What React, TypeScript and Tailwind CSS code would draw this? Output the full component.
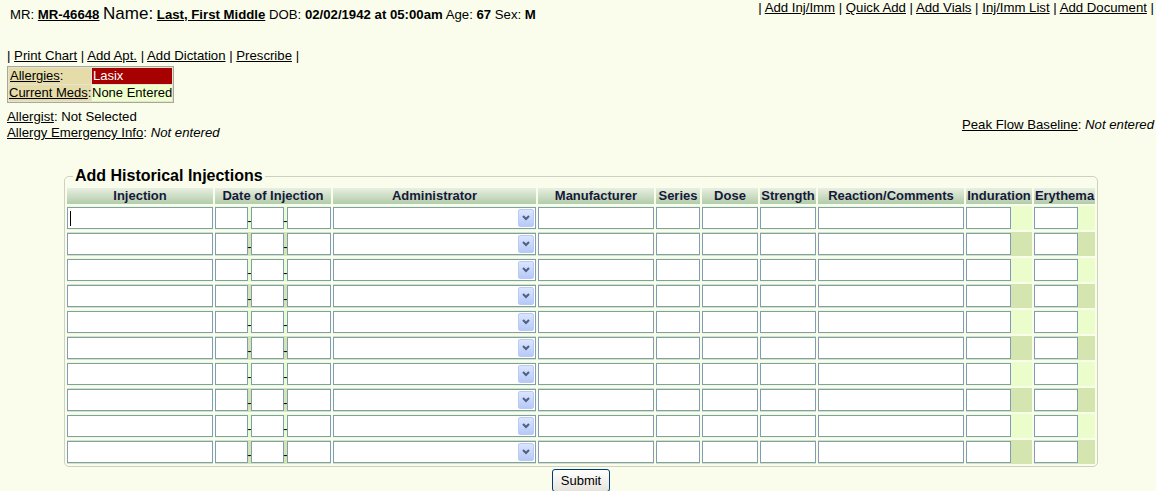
import React from 'react'

const headers: { label: string; col: string }[] = [
	{ label: 'Injection', col: 'w-[146px]' },
	{ label: 'Date of Injection', col: 'w-[116px]' },
	{ label: 'Administrator', col: 'w-[203px]' },
	{ label: 'Manufacturer', col: 'w-[116px]' },
	{ label: 'Series', col: 'w-[44px]' },
	{ label: 'Dose', col: 'w-[56px]' },
	{ label: 'Strength', col: 'w-[56px]' },
	{ label: 'Reaction/Comments', col: 'w-[146px]' },
	{ label: 'Induration', col: 'w-[66px]' },
	{ label: 'Erythema', col: 'w-[61px]' },
]

const inputCls = 'block h-[22px] border border-[#7f9db9] bg-white outline-none'

/**
 * Link with black underline, the old way.
 */
function Link({ children }: { children: React.ReactNode }) {
	return <a className="cursor-pointer text-black underline">{children}</a>
}

/**
 * Pipe separated link bar.
 */
function LinkBar({ links }: { links: string[] }) {
	return (
		<span>
			|{' '}
			{links.map((l, i) => (
				<React.Fragment key={l}>
					<Link>{l}</Link>
					{i < links.length - 1 ? ' | ' : ' |'}
				</React.Fragment>
			))}
		</span>
	)
}

/**
 * XP style dropdown, closed.
 */
function AdminSelect() {
	return (
		<div className="flex h-[22px] w-full items-center justify-end border border-[#7f9db9] bg-white pr-px">
			<div className="flex h-[18px] w-[16px] items-center justify-center rounded-[2px] border border-[#b9cbf5] bg-linear-to-b from-[#dbe5fd] to-[#b6c9f7]">
				<svg width="8" height="6" viewBox="0 0 8 6">
					<polyline points="1,1 4,4 7,1" fill="none" stroke="#4d6185" strokeWidth="2" />
				</svg>
			</div>
		</div>
	)
}

/**
 * One empty injection row.
 */
function InjectionRow({ index }: { index: number }) {
	const bg = index % 2 === 0 ? 'bg-[#ebfdca]' : 'bg-[#d4e5b0]'
	const td = `${bg} p-0 py-px align-middle`
	return (
		<tr>
			<td className={td}>
				<div className="relative">
					<input type="text" className={`${inputCls} w-full`} />
					{index === 0 && <span className="absolute left-[3px] top-[4px] h-[15px] w-px bg-black" />}
				</div>
			</td>
			<td className={td}>
				<div className="flex items-end">
					<input type="text" className={`${inputCls} w-[33px]`} />
					<span className="mb-[2px] flex w-[3px] justify-center text-[13px] leading-[13px]">-</span>
					<input type="text" className={`${inputCls} w-[33px]`} />
					<span className="mb-[2px] flex w-[3px] justify-center text-[13px] leading-[13px]">-</span>
					<input type="text" className={`${inputCls} w-[44px]`} />
				</div>
			</td>
			<td className={td}>
				<AdminSelect />
			</td>
			<td className={td}>
				<input type="text" className={`${inputCls} w-full`} />
			</td>
			<td className={td}>
				<input type="text" className={`${inputCls} w-full`} />
			</td>
			<td className={td}>
				<input type="text" className={`${inputCls} w-full`} />
			</td>
			<td className={td}>
				<input type="text" className={`${inputCls} w-full`} />
			</td>
			<td className={td}>
				<input type="text" className={`${inputCls} w-full`} />
			</td>
			<td className={td}>
				<input type="text" className={`${inputCls} w-[45px]`} />
			</td>
			<td className={td}>
				<input type="text" className={`${inputCls} w-[44px]`} />
			</td>
		</tr>
	)
}

export default function App() {
	return (
		<div className="min-h-[491px] bg-[#fafdec] pl-[7px] pr-[2px] font-['Liberation_Sans',Arial,sans-serif] text-[13.2px] text-black">
			{/* patient header */}
			<div className="flex h-[48px] items-start justify-between">
				<div className="pl-[3px] pt-[3px] leading-[22px] whitespace-nowrap">
					MR: <Link><b>MR-46648</b></Link> <span className="text-[17px]">Name:</span>{' '}
					<Link><b>Last, First Middle</b></Link> DOB: <b>02/02/1942 at 05:00am</b> Age: <b>67</b> Sex: <b>M</b>
				</div>
				<div className="leading-[16px] whitespace-nowrap">
					<LinkBar links={['Add Inj/Imm', 'Quick Add', 'Add Vials', 'Inj/Imm List', 'Add Document']} />
				</div>
			</div>

			<div className="leading-[16px]">
				<LinkBar links={['Print Chart', 'Add Apt.', 'Add Dictation', 'Prescribe']} />
			</div>

			<table className="mt-[2px] w-[167px] table-fixed border-separate border-spacing-px border border-[#a8a898] bg-[#e4e4d4] text-[13px] leading-[16px] whitespace-nowrap">
				<colgroup>
					<col className="w-[82px]" />
					<col className="w-[80px]" />
				</colgroup>
				<tbody>
					<tr>
						<td className="h-[16px] overflow-hidden bg-[#e6dcaa] p-0 pl-px">
							<Link>Allergies</Link>:
						</td>
						<td className="h-[16px] overflow-hidden bg-[#a60000] p-0 pl-px text-white">Lasix</td>
					</tr>
					<tr>
						<td className="h-[16px] overflow-hidden bg-[#e6dcaa] p-0">
							<Link>Current Meds</Link>:
						</td>
						<td className="h-[16px] overflow-hidden bg-[#eeffcc] p-0">None Entered</td>
					</tr>
				</tbody>
			</table>

			<div className="mt-[6px] flex items-center justify-between leading-[16px]">
				<div>
					<div>
						<Link>Allergist</Link>: Not Selected
					</div>
					<div>
						<Link>Allergy Emergency Info</Link>: <i>Not entered</i>
					</div>
				</div>
				<div>
					<Link>Peak Flow Baseline</Link>: <i>Not entered</i>
				</div>
			</div>

			<div className="ml-[57px] mt-[25px] w-[1034px]">
				<fieldset className="rounded-[5px] border border-[#d0d0bf]">
					<legend className="ml-[8px] px-[2px] text-[16px] font-bold leading-[20px]">Add Historical Injections</legend>
					<table className="w-[1032px] table-fixed border-separate border-spacing-[2px]">
						<colgroup>
							{headers.map((h) => (
								<col key={h.label} className={h.col} />
							))}
						</colgroup>
						<thead>
							<tr>
								{headers.map((h) => (
									<th
										key={h.label}
										className="h-[16px] bg-linear-to-b from-[#e8efe2] to-[#b2cca9] p-0 text-center text-[13px] font-bold leading-[16px] whitespace-nowrap text-[#17183a]"
									>
										{h.label}
									</th>
								))}
							</tr>
						</thead>
						<tbody>
							{Array.from({ length: 10 }).map((_, i) => (
								<InjectionRow key={i} index={i} />
							))}
						</tbody>
					</table>
				</fieldset>
				<div className="mt-[2px] flex justify-center">
					<button className="h-[23px] w-[58px] rounded-[3px] border border-[#003c74] bg-linear-to-b from-white to-[#e6e4dc] text-[13px] leading-[20px] text-black">
						Submit
					</button>
				</div>
			</div>
		</div>
	)
}
